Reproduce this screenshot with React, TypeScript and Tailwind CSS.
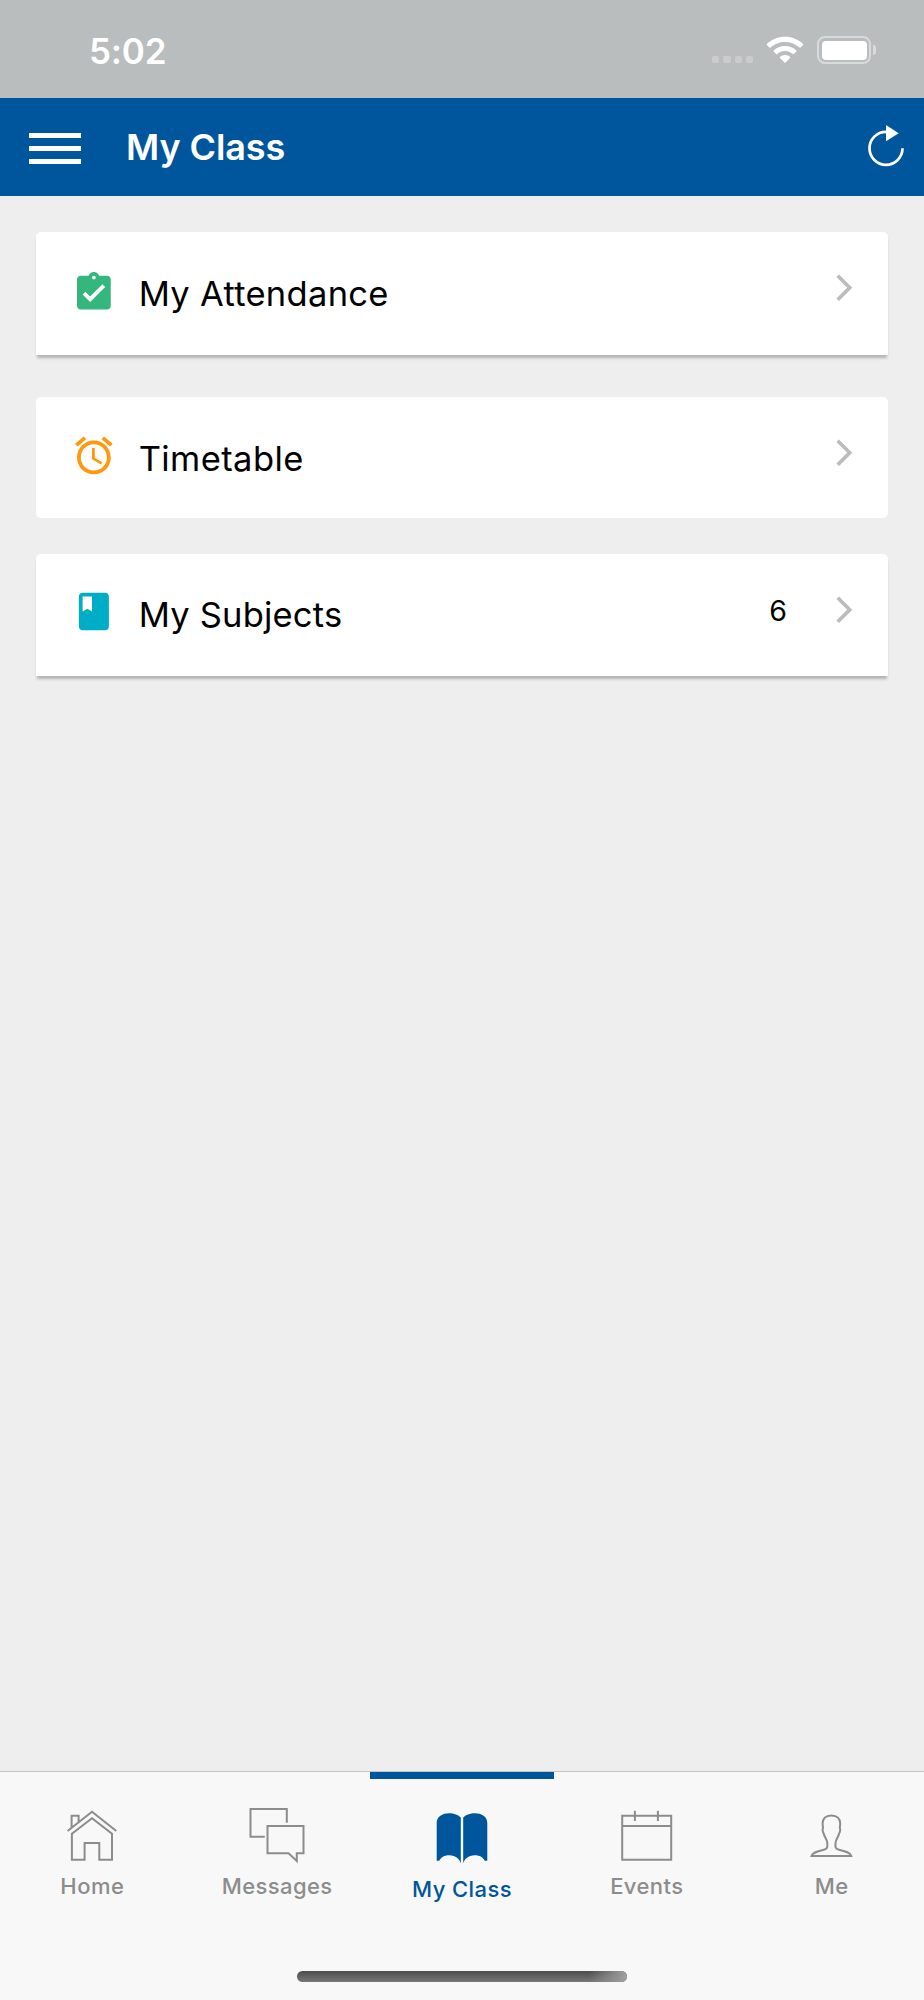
import React from "react";

function WifiIcon() {
  return (
    <svg width="38" height="28" viewBox="0 0 38 28" fill="#fff">
      <path d="M19 .8C12 .8 5.600 3.500 .9 8c-.3.3-.3.8 0 1.100l2.500 2.500c.3.3.8.3 1.100 0C8.400 7.900 13.400 5.900 19 5.900s10.600 2 14.500 5.700c.3.3.8.3 1.100 0L37.100 9.100c.3-.3.3-.8 0-1.100C32.400 3.500 26 .8 19 .8z" />
      <path d="M19 9.900c-4.400 0-8.400 1.700-11.400 4.500-.3.3-.3.8 0 1.100l2.600 2.600c.3.3.8.3 1.100 0 2-1.900 4.700-3 7.700-3s5.700 1.100 7.700 3c.3.3.8.3 1.100 0l2.600-2.600c.3-.3.3-.8 0-1.100-3-2.800-7-4.500-11.400-4.500z" />
      <path d="M19 19c-2 0-3.700.7-5 1.900-.3.3-.3.7 0 1l4.400 4.700c.3.4.9.4 1.200 0L24 21.900c.3-.3.3-.7 0-1-1.300-1.200-3-1.900-5-1.900z" />
    </svg>
  );
}

function StatusBar() {
  return (
    <header className="flex h-[98px] items-start bg-[#b9bdbe] text-white">
      <span className="ml-[89px] mt-[29px] text-[35px] font-[560] leading-[44px] tracking-[-0.200px]">5:02</span>
      <div className="ml-auto flex gap-[4px] pt-[56px]">
        <i className="size-[7.2px] rounded-[2px] bg-[#cacccd]" />
        <i className="size-[7.2px] rounded-[2px] bg-[#cacccd]" />
        <i className="size-[7.2px] rounded-[2px] bg-[#cacccd]" />
        <i className="size-[7.2px] rounded-[2px] bg-[#cacccd]" />
      </div>
      <div className="ml-[13px] pt-[36px]">
        <WifiIcon />
      </div>
      <div className="ml-[13px] mr-[48px] flex items-center gap-[1.500px] pt-[36px]">
        <div className="h-[28px] w-[54px] rounded-[8px] border-2 border-[#d8dadb] p-[2.500px]">
          <div className="h-full rounded-[4px] bg-white" />
        </div>
        <div className="h-[10px] w-[3.500px] rounded-r-full bg-[#d8dadb]" />
      </div>
    </header>
  );
}

function TitleBar() {
  return (
    <div className="flex h-[98px] items-start bg-[#00569c] text-white">
      <button aria-label="Menu" className="ml-[29px] mt-[35px] flex w-[52px] flex-col gap-[8.500px]">
        <span className="h-[4.500px] w-full bg-white" />
        <span className="h-[4.500px] w-full bg-white" />
        <span className="h-[4.500px] w-full bg-white" />
      </button>
      <h1 className="ml-[45px] mt-[27px] text-[36px] font-[560] leading-[44px] tracking-[-0.100px]">My Class</h1>
      <svg className="ml-auto mr-[18px] mt-[25px]" width="38" height="46" viewBox="0 0 38 46">
        <path d="M34.500 25.300A16.500 16.500 0 1 1 18 8.800" fill="none" stroke="#fff" strokeWidth="2.700" />
        <path d="M18 2l12.700 8.300L18 18.300z" fill="#fff" />
      </svg>
    </div>
  );
}

type CardProps = {
  label: string;
  icon: string;
  iconClass: string;
  className: string;
  labelClass: string;
  count?: number;
};

function Card({ label, icon, iconClass, className, labelClass, count }: CardProps) {
  return (
    <a className={`flex items-start bg-white ${className}`}>
      <svg className={`ml-[35px] shrink-0 ${iconClass}`} width="45" height="45" viewBox="-0.200 0 24 24" fill="currentColor">
        <path d={icon} />
      </svg>
      <span className={`ml-[22.700px] text-[34.500px] font-[430] leading-[44px] text-black ${labelClass}`}>{label}</span>
      <span className="ml-auto mr-[30px] mt-[38px] text-[28.500px] leading-[38px] text-black">{count}</span>
      <svg className="mr-[18px] mt-[29px] shrink-0" width="53" height="53" viewBox="0 0 53 53" fill="none" stroke="#bcbcbc" strokeWidth="3.700">
        <path d="M20.700 14.700L32.700 26.700 20.700 38.700" />
      </svg>
    </a>
  );
}

const ATTENDANCE =
  "M19 3h-4.180C14.400 1.840 13.300 1 12 1c-1.300 0-2.400.84-2.820 2H5c-1.100 0-2 .9-2 2v14c0 1.100.9 2 2 2h14c1.100 0 2-.9 2-2V5c0-1.100-.9-2-2-2zm-7 0c.55 0 1 .45 1 1s-.45 1-1 1-1-.45-1-1 .45-1 1-1zm-2 14l-4-4 1.410-1.410L10 14.170l6.590-6.590L18 9l-8 8z";
const ALARM =
  "M22 5.720l-4.600-3.860-1.290 1.530 4.600 3.860L22 5.720zM7.880 3.390L6.600 1.860 2 5.710l1.290 1.530 4.590-3.850zM12.500 8H11v6l4.750 2.850.75-1.230-4-2.370V8zM12 4c-4.970 0-9 4.030-9 9s4.020 9 9 9c4.970 0 9-4.030 9-9s-4.030-9-9-9zm0 16c-3.870 0-7-3.130-7-7s3.130-7 7-7 7 3.130 7 7-3.130 7-7 7z";
const BOOKMARK =
  "M18 2H6c-1.100 0-2 .9-2 2v16c0 1.100.9 2 2 2h12c1.100 0 2-.9 2-2V4c0-1.100-.9-2-2-2zM6 4h5v8l-2.500-1.500L6 12V4z";

function Tab({ label, active, labelClass, children }: { label: string; active?: boolean; labelClass: string; children: React.ReactNode }) {
  return (
    <a className={`relative flex flex-1 flex-col items-center pt-[28px] ${active ? "text-[#00569c]" : "text-[#8c8c8c]"}`}>
      {active && <span className="absolute inset-x-0 top-0 h-[7px] bg-[#00569c]" />}
      <svg width="60" height="70" viewBox="0 0 60 70" fill="none" stroke="currentColor" strokeWidth="2">
        {children}
      </svg>
      <span className={`whitespace-nowrap text-[22px] font-[450] leading-[28px] ${labelClass}`}>{label}</span>
    </a>
  );
}

export default function App() {
  return (
    <div className="flex h-[2000px] w-[924px] flex-col bg-[#eeeeee] font-['Inter',sans-serif]">
      <StatusBar />
      <TitleBar />
      <main className="flex flex-1 flex-col px-[36px] pt-[36px]">
        <Card
          label="My Attendance"
          icon={ATTENDANCE}
          iconClass="mt-[38px] text-[#34b77c]"
          className="h-[123px] rounded-t-[5px] shadow-[0_4px_3px_-1px_rgba(0,0,0,0.25)]"
          labelClass="mt-[40px] tracking-[0.3px]"
        />
        <Card
          label="Timetable"
          icon={ALARM}
          iconClass="mt-[36px] text-[#ff980a]"
          className="mt-[42px] h-[121px] rounded-[5px]"
          labelClass="mt-[40px] tracking-[0.4px]"
        />
        <Card
          label="My Subjects"
          icon={BOOKMARK}
          iconClass="mt-[35px] text-[#00adc6]"
          className="mt-[36px] h-[122px] rounded-t-[5px] shadow-[0_4px_3px_-1px_rgba(0,0,0,0.25)]"
          labelClass="mt-[39px] tracking-[0.2px]"
          count={6}
        />
      </main>
      <nav className="flex h-[229px] flex-col border-t border-[#c4c4c4] bg-[#f8f8f8]">
        <div className="flex h-[199px]">
          <Tab label="Home" labelClass="mt-[2px] tracking-[0.5px]">
            <path d="M9.600 27.700V15.700H16.600V22.300M5.600 31L30 11.700 54.300 31" />
            <path d="M9.900 33.700L30 18.300 50 33.700V59.700H37.300V43H22.600V59.700H9.900z" />
          </Tab>
          <Tab label="Messages" labelClass="mt-[2px] tracking-[0.4px]">
            <path d="M17.800 36.700H3.500V9H39.800V22.700" />
            <path d="M20.500 26H56.500V53.300H49.800V61L41.500 53.300H20.500z" />
          </Tab>
          <Tab label="My Class" active labelClass="mt-[5px] tracking-[0.4px]">
            <g fill="currentColor" stroke="none">
              <path d="M4.700 60.700V23C4.700 16.500 10.500 13.200 17 13.200C22 13.200 26.500 15 28.800 17.500V63.500C28 59.500 23.500 55.300 17.300 55.300C12 55.300 9 57.500 7.300 60.700z" />
              <path d="M55.300 60.700V23C55.300 16.500 49.500 13.200 43 13.200C38 13.200 33.500 15 31.200 17.500V63.500C32 59.500 36.500 55.300 42.700 55.300C48 55.300 51 57.500 52.700 60.700z" />
            </g>
          </Tab>
          <Tab label="Events" labelClass="mt-[2px] tracking-[0.4px]">
            <path d="M5.200 15.700H54.200V59.700H5.200zM5.200 26H54.200M17.900 10.700V21M40.900 10.700V21" />
          </Tab>
          <Tab label="Me" labelClass="mt-[2px] tracking-[0.4px]">
            <path d="M29.400 15.500C23.500 15.500 20.600 19 20.600 23.500C20.600 25.500 21 27 21 28C20.200 29 20.700 32 21.700 33.500C22.400 37.500 25.300 39 25.300 43V46.500C25.300 48.500 24 49.300 21 50C15 51.300 10.500 52.300 9.500 56H49.300C48.300 52.300 43.800 51.300 37.800 50C34.800 49.300 33.500 48.500 33.500 46.500V43C33.500 39 36.400 37.500 37.100 33.500C38.100 32 38.600 29 37.800 28C37.800 27 38.200 25.500 38.200 23.500C38.200 19 35.300 15.500 29.400 15.500z" />
          </Tab>
        </div>
        <div className="mx-auto h-[11px] w-[330px] rounded-full bg-linear-to-b from-[#4c4c4c] to-[#787878]">
          <div className="ml-auto h-full w-[38px] rounded-r-full bg-linear-to-r from-transparent to-[#a0a0a0]" />
        </div>
      </nav>
    </div>
  );
}
